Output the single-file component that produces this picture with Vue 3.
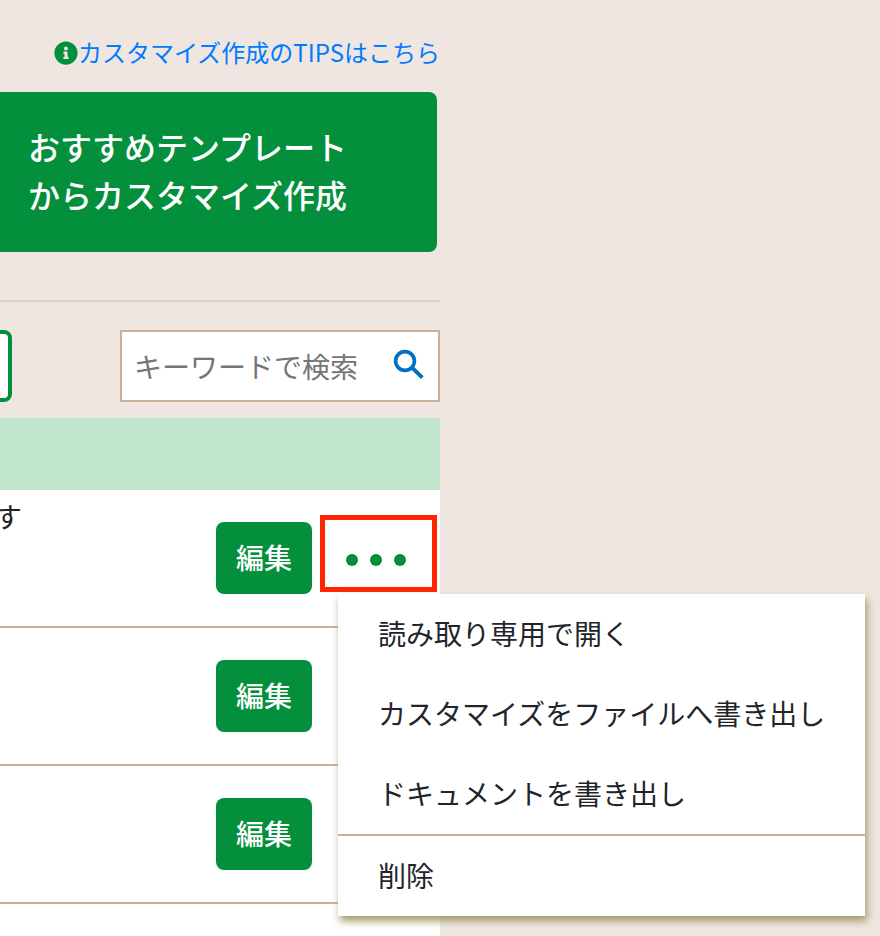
<template>
  <div class="page">
    <main class="content">
      <div class="tips">
        <svg class="tips-icon" viewBox="0 0 512 512" aria-hidden="true">
          <path fill="currentColor" d="M256 8C119 8 8 119 8 256s111 248 248 248 248-111 248-248S393 8 256 8zm0 110c23 0 42 19 42 42s-19 42-42 42-42-19-42-42 19-42 42-42zm56 254c0 7-5 12-12 12h-88c-7 0-12-5-12-12v-24c0-7 5-12 12-12h12v-64h-12c-7 0-12-5-12-12v-24c0-7 5-12 12-12h64c7 0 12 5 12 12v100h12c7 0 12 5 12 12v24z" />
        </svg>
        <a href="#" class="tips-link">カスタマイズ作成のTIPSはこちら</a>
      </div>

      <button type="button" class="template-btn">
        おすすめテンプレート<br />からカスタマイズ作成
      </button>

      <hr class="divider" />

      <div class="toolbar">
        <button type="button" class="outline-btn" aria-label="表示切替"></button>
        <label class="search">
          <input v-model="keyword" type="text" class="search-input" placeholder="キーワードで検索" aria-label="キーワードで検索" />
          <svg class="search-icon" viewBox="0 0 32 32" aria-hidden="true">
            <circle cx="13" cy="13" r="9.4" fill="none" stroke="currentColor" stroke-width="3.6" />
            <path d="M19.5 18.5h2.2l10 9.8-2.8 2.8-9.9-9.9v-2.2z" fill="currentColor" />
          </svg>
        </label>
      </div>

      <table class="list">
        <thead>
          <tr>
            <th></th>
            <th></th>
          </tr>
        </thead>
        <tbody>
          <tr v-for="row in rows" :key="row.id">
            <td class="name">{{ row.name }}</td>
            <td class="actions-cell">
              <div class="actions">
                <button type="button" class="edit-btn">編集</button>
                <div class="more">
                  <button type="button" class="more-btn" aria-label="メニュー" @click="toggleMenu(row.id)">
                    <span class="dot"></span>
                    <span class="dot"></span>
                    <span class="dot"></span>
                  </button>
                  <span v-if="openId === row.id" class="highlight"></span>
                  <ul v-if="openId === row.id" class="menu">
                    <li v-for="item in menuItems" :key="item.label" :class="{ separated: item.separated }">
                      <button type="button" class="menu-item" @click="openId = null">{{ item.label }}</button>
                    </li>
                  </ul>
                </div>
              </div>
            </td>
          </tr>
        </tbody>
      </table>
      <div class="list-rest"></div>
    </main>
  </div>
</template>

<script setup>
import { ref } from 'vue'

const keyword = ref('')
const openId = ref(1)

const rows = [
  { id: 1, name: 'す' },
  { id: 2, name: '' },
  { id: 3, name: '' },
]

const menuItems = [
  { label: '読み取り専用で開く' },
  { label: 'カスタマイズをファイルへ書き出し' },
  { label: 'ドキュメントを書き出し' },
  { label: '削除', separated: true },
]

function toggleMenu(id) {
  openId.value = openId.value === id ? null : id
}
</script>

<style>
body {
  background: #efe6e1;
}
</style>

<style scoped>
.page {
  min-height: 100vh;
  display: flex;
  background: #efe6e1;
  color: #212529;
  font-family: "Noto Sans CJK JP", sans-serif;
  font-size: 28px;
}
.page * {
  box-sizing: border-box;
}
button,
input {
  font-family: inherit;
  font-size: 28px;
  margin: 0;
}
button {
  cursor: pointer;
}
.content {
  width: 50%;
  display: flex;
  flex-direction: column;
  padding-top: 34px;
}
.tips {
  display: flex;
  align-items: center;
  justify-content: flex-end;
  height: 38px;
  margin-bottom: 20px;
  font-size: 24px;
}
.tips-icon {
  width: 24px;
  height: 24px;
  color: #038f3c;
}
.tips-link {
  padding-bottom: 4px;
  color: #007bff;
  text-decoration: none;
  white-space: nowrap;
}
.template-btn {
  height: 160px;
  margin-right: 3px;
  padding: 0 28px 4px;
  border: none;
  border-radius: 0 8px 8px 0;
  background: #038f3c;
  color: #fff;
  font-size: 32px;
  font-weight: 500;
  line-height: 48px;
  text-align: left;
}
.divider {
  width: 100%;
  margin: 48px 0 28px;
  border: none;
  border-top: 2px solid #dbd2cd;
}
.toolbar {
  display: flex;
  justify-content: space-between;
  margin-bottom: 16px;
}
.outline-btn {
  width: 12px;
  height: 72px;
  padding: 0;
  border: 4px solid #038f3c;
  border-left: none;
  border-radius: 0 8px 8px 0;
  background: #fff;
}
.search {
  display: flex;
  align-items: center;
  width: 320px;
  height: 72px;
  padding: 0 14px 0 12px;
  border: 2px solid #c8b198;
  background: #fff;
}
.search-input {
  flex: 1;
  min-width: 0;
  padding: 0;
  border: none;
  outline: none;
  background: none;
  color: #212529;
}
.search-input::placeholder {
  color: #757575;
  opacity: 1;
}
.search-icon {
  width: 32px;
  height: 32px;
  margin-bottom: 4px;
  color: #0070c0;
}
.list {
  width: 100%;
  border-collapse: separate;
  border-spacing: 0;
  background: #fff;
}
.list th {
  height: 72px;
  padding: 0;
  background: #c2e6cd;
}
.list td {
  height: 138px;
  padding: 0;
  border-bottom: 2px solid #c8b198;
}
.list .name {
  padding-top: 6px;
  vertical-align: top;
  line-height: 40px;
  text-indent: -6px;
}
.actions-cell {
  width: 224px;
}
.actions {
  display: flex;
  gap: 8px;
}
.edit-btn {
  width: 96px;
  height: 72px;
  padding: 0 0 2px;
  border: none;
  border-radius: 8px;
  background: #038f3c;
  color: #fff;
  font-weight: 500;
}
.more {
  position: relative;
}
.more-btn {
  display: flex;
  align-items: center;
  justify-content: center;
  gap: 12px;
  width: 112px;
  height: 72px;
  padding: 4px 0 0;
  border: none;
  background: none;
}
.dot {
  width: 12px;
  height: 12px;
  border-radius: 50%;
  background: #038f3c;
}
.highlight {
  position: absolute;
  top: -7px;
  left: 0;
  width: 117px;
  height: 77px;
  border: 5px solid #ff2600;
  pointer-events: none;
}
.menu {
  position: absolute;
  z-index: 10;
  top: 72px;
  left: 18px;
  margin: 0;
  padding: 0;
  list-style: none;
  background: #fff;
  box-shadow: 2px 5px 8px #a09a68;
}
.menu .separated {
  border-top: 2px solid #c8b198;
}
.menu-item {
  display: block;
  width: 100%;
  height: 80px;
  padding: 0 40px 2px;
  border: none;
  background: none;
  color: #212529;
  text-align: left;
  white-space: nowrap;
}
.list-rest {
  flex: 1;
  background: #fff;
}
</style>
